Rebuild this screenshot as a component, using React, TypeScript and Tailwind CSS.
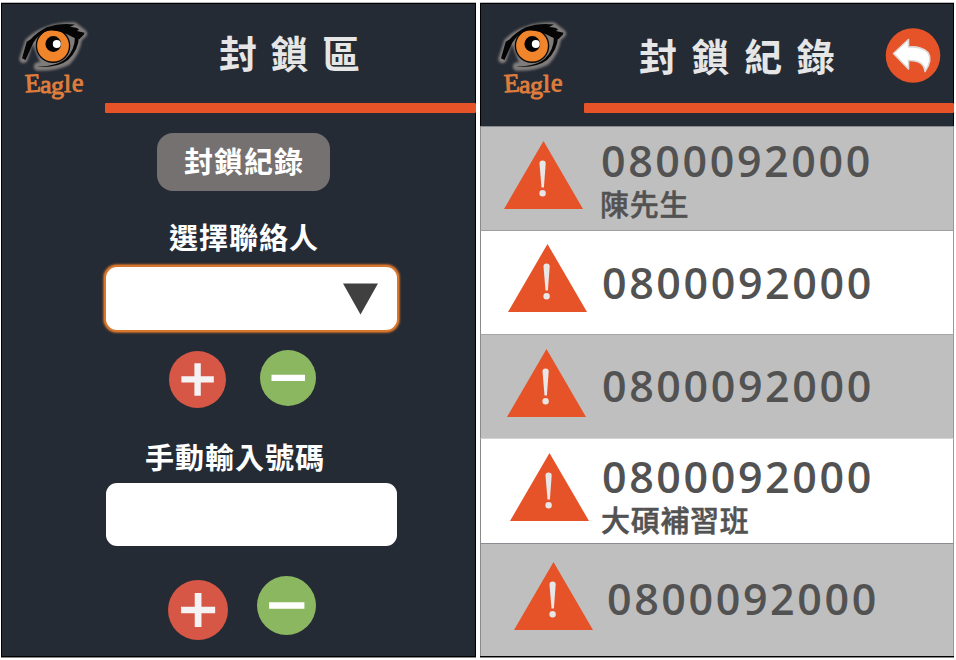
import type { ReactNode } from "react";

const CJK = "font-['Noto_Sans_CJK_TC',sans-serif]";

function EagleLogo() {
  return (
    <svg width="103" height="118" viewBox="0 0 103 118" className="shrink-0">
      <defs>
        <filter id="glow" x="-20%" y="-30%" width="140%" height="160%">
          <feGaussianBlur stdDeviation="0.9" />
        </filter>
      </defs>
      <g fill="none" stroke="#7f7b7a" strokeLinecap="round" strokeLinejoin="round" filter="url(#glow)">
        <path d="M21.500 55L27 38Q44 22 72 22.500L81 29.500L76 34Q74 48 65 57Q54 63 36 62.500" strokeWidth="8.500" />
        <path d="M32 38Q44 25 56 27L74 34Q73 48 63 56Q52 61 40 58Z" fill="#7f7b7a" strokeWidth="4" />
      </g>
      <circle cx="51" cy="41.700" r="16.600" fill="#f0852b" stroke="#090909" strokeWidth="1.400" />
      <circle cx="51.300" cy="40" r="7.900" fill="#050505" />
      <circle cx="54.800" cy="40" r="4" fill="#fff" />
      <path d="M20 54.300L24.700 37.700L28.700 35.300Q34 29 44.700 23.300Q58 18.500 73 20.500L68 23Q75 23 77 25.500L75 27L82.500 28.700L82 30.500L77.300 35.300Q74 35 70 32.700Q61 28 54.700 27Q48 25.500 43 27.700Q36 31 31.300 38.700Q28 46 23.500 56Z" fill="#050505" />
      <path d="M77 33Q76.500 46 66 56Q56 64 35 62.700Q56 62 64 54.500Q73 46 73 32Z" fill="#050505" />
      <g fill="#df7d3c" stroke="#df7d3c" strokeWidth="0.900" strokeLinejoin="round" fontSize="26" className="font-['Liberation_Serif',serif]">
        <text y="88.300" x="23.200 38 49 62 69.500" dy="0 0.500 1 -1.500 -1.500" rotate="-3 0 0 0 4">Eagle</text>
      </g>
    </svg>
  );
}

function Header({ children }: { children: ReactNode }) {
  return (
    <header className="flex h-[122px]">
      <EagleLogo />
      <div className="-mr-px min-w-0 flex-1">
        <div className="flex h-[99px]">{children}</div>
        <div className="h-[10px] rounded-[1px] bg-[#e65328]" />
      </div>
    </header>
  );
}

function Plus({ size }: { size: number }) {
  return (
    <svg width={size} height={size} viewBox="0 0 57 57">
      <circle cx="28.500" cy="28.500" r="28.500" fill="#d65745" />
      <path d="M25.400 12.300h6.400v13h13v6.200h-13v13.200h-6.400V31.500h-13v-6.200h13z" fill="#f4f2f3" />
    </svg>
  );
}

function Minus({ size }: { size: number }) {
  return (
    <svg width={size} height={size} viewBox="0 0 56 56">
      <circle cx="28" cy="28" r="28" fill="#8ab760" />
      <path d="M11.500 24.800h33.500v6.200h-33.500z" fill="#fff" />
    </svg>
  );
}

function Warning() {
  return (
    <svg width="79" height="68" viewBox="0 0 79 68" className="shrink-0">
      <path d="M39.500 0L79 68H0Z" fill="#e65328" />
      <path d="M35.500 22.500Q35.500 19.500 38.600 19.500Q41.700 19.500 41.700 22.500L39.900 46.500H37.500Z" fill="#e8e6e7" />
      <circle cx="38.600" cy="52.300" r="3.200" fill="#e8e6e7" />
    </svg>
  );
}

type Entry = { name?: string; row: string; icon: string; text: string };

const entries: Entry[] = [
  { name: "陳先生", row: "h-[104px] bg-[#bfbfbf] border-t-[#88898c]", icon: "ml-[23px] mt-[14px]", text: "ml-[18px] mt-[12px]" },
  { row: "h-[104px] bg-white border-t-[#a0a0a0]", icon: "ml-[27px] mt-[13px]", text: "ml-[15px] mt-[30px]" },
  { row: "h-[104px] bg-[#bfbfbf] border-t-[#a5a5a5]", icon: "ml-[26px] mt-[14px]", text: "ml-[16px] mt-[29px]" },
  { name: "大碩補習班", row: "h-[105px] bg-white border-t-[#d4d4d4]", icon: "ml-[29px] mt-[14px]", text: "ml-[13px] mt-[16px]" },
  { row: "h-[113px] bg-[#bfbfbf] border-t-[#8a8c92]", icon: "ml-[33px] mt-[18px]", text: "ml-[14px] mt-[33px]" },
];

export default function App() {
  return (
    <div className={`flex h-[660px] w-[956px] gap-1 overflow-hidden bg-white pl-px pt-[3px] ${CJK}`}>
      <section className="h-[654px] w-[475px] border border-black bg-[#252b35] shadow-[0_-1px_#bbb,0_1px_#888]">
        <Header>
          <h1 className="ml-[114px] mt-[20px] h-[56px] whitespace-nowrap text-[38px] font-bold leading-[56px] tracking-[13.5px] text-[#e6e6e6]">封鎖區</h1>
        </Header>
        <div className="flex flex-col items-start">
          <button className="ml-[155px] mt-[7px] h-[58px] w-[173px] rounded-[16px] bg-[#767171] pb-[3px] pl-px text-[29px] font-bold leading-[55px] tracking-[1px] text-white">封鎖紀錄</button>
          <label className="ml-[167px] mt-[24px] h-[42px] whitespace-nowrap text-[29px] font-bold leading-[42px] tracking-[1px] text-white">選擇聯絡人</label>
          <div className="ml-[104px] mt-[10px] flex h-[63px] w-[291px] justify-end rounded-[11px] bg-white pr-[19px] pt-[16px] shadow-[0_0_0_2px_#d8772c,0_0_2px_3px_#b96a30]">
            <svg width="35" height="32" viewBox="0 0 35 32"><path d="M0 .5H35L17.500 31.500Z" fill="#404040" /></svg>
          </div>
          <div className="ml-[167px] mt-[20px] flex h-[57px] items-start gap-[34px]">
            <div className="mt-px"><Plus size={57} /></div>
            <div><Minus size={56} /></div>
          </div>
          <label className="ml-[143px] mt-[28px] h-[42px] whitespace-nowrap text-[29px] font-bold leading-[42px] tracking-[1px] text-white">手動輸入號碼</label>
          <div className="ml-[104px] mt-[6px] h-[63px] w-[291px] rounded-[11px] bg-white" />
          <div className="ml-[166px] mt-[30px] flex items-start gap-[29px]">
            <div className="mt-[4px]"><Plus size={60} /></div>
            <Minus size={59} />
          </div>
        </div>
      </section>
      <section className="h-[654px] w-[474px] border border-black bg-[#252b35] shadow-[0_-1px_#bbb,0_1px_#888]">
        <Header>
          <h1 className="ml-[55px] mt-[23px] h-[56px] shrink-0 whitespace-nowrap text-[38px] font-bold leading-[56px] tracking-[14.6px] text-[#e6e6e6]">封鎖紀錄</h1>
          <svg width="56" height="56" viewBox="0 0 56 56" className="ml-[36px] mt-[24px] shrink-0">
            <circle cx="28" cy="27.500" r="27.300" fill="#e65328" />
            <path d="M8.500 25.500L23.500 11.500V19Q36 18 43 24.500Q48 32 40 43.500Q39 32 23.500 32.500V41Z" fill="#fff" stroke="#ddd8d6" strokeWidth="1.600" strokeLinejoin="round" />
          </svg>
        </Header>
        <ul className="-mx-px">
          {entries.map((entry, i) => (
            <li key={i} className={`flex items-start border-t border-l border-r border-l-[#8a8a8a] border-r-[#999] ${entry.row}`}>
              <div className={entry.icon}><Warning /></div>
              <div className={`whitespace-nowrap text-[#525252] ${entry.text}`}>
                <div className="h-[44px] font-['Open_Sans',sans-serif] text-[43px] font-semibold leading-[44px] tracking-[2.600px]">0800092000</div>
                {entry.name && (
                  <div className="-ml-px -mt-px h-[42px] text-[29px] font-medium leading-[42px] tracking-[0.700px] [-webkit-text-stroke:0.500px_#525252]">{entry.name}</div>
                )}
              </div>
            </li>
          ))}
        </ul>
      </section>
    </div>
  );
}
